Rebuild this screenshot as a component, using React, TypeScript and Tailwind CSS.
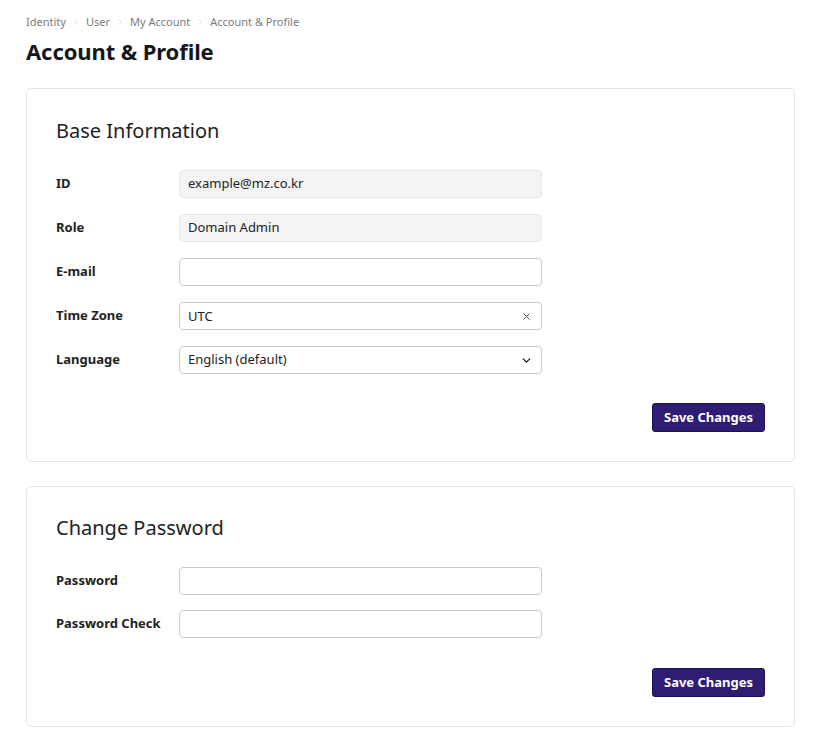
import { ChevronRight, X, ChevronDown } from "lucide-react"

const crumbs = ["Identity", "User", "My Account", "Account & Profile"]

function Row({ label, children }: { label: string; children: React.ReactNode }) {
  return (
    <div className="flex items-center">
      <div className="w-[123px] text-[13px] font-bold text-[#222222] leading-none -mt-[2px]">{label}</div>
      {children}
    </div>
  )
}

function ReadOnly({ value }: { value: string }) {
  return (
    <div className="w-[363px] h-[28px] flex items-center px-[8px] bg-[#f4f4f4] border border-[#e8e8e8] rounded-[4px] text-[13px] text-[#222222]">
      {value}
    </div>
  )
}

function TextInput({ value = "", type = "text" }: { value?: string; type?: string }) {
  return (
    <input
      type={type}
      defaultValue={value}
      className="w-[363px] h-[28px] px-[8px] bg-white border border-[#c9c9cf] rounded-[4px] text-[13px] text-[#222222] outline-none"
    />
  )
}

function SaveButton() {
  return (
    <div className="flex justify-end">
      <button className="w-[113px] h-[29px] bg-[#2f1c73] border border-[#1c0f52] rounded-[3px] text-white text-[13px] font-bold">
        Save Changes
      </button>
    </div>
  )
}

export default function App() {
  return (
    <div className="min-h-screen bg-white px-[26px] pt-[14px] pb-[20px] font-['Noto_Sans',sans-serif]">
      {/* breadcrumb */}
      <nav className="flex items-center gap-[5px] text-[11px] leading-[15px] text-[#7a7a80]">
        {crumbs.map((c, i) => (
          <span key={c} className="flex items-center gap-[5px]">
            {i > 0 && <ChevronRight className="w-[10px] h-[10px] text-[#c8c8cc]" strokeWidth={1.5} />}
            {c}
          </span>
        ))}
      </nav>
      <h1 className="mt-[7px] text-[22px] leading-[30px] font-bold text-[#16161d] tracking-[-0.1px]">Account &amp; Profile</h1>

      <section className="mt-[22px] w-[769px] border border-[#e3e3e6] rounded-[5px] px-[29px] pt-[28px] pb-[29px]">
        <h2 className="text-[20px] leading-[27px] text-[#222222]">Base Information</h2>
        <div className="mt-[26px] flex flex-col gap-[16px]">
          <Row label="ID">
            <ReadOnly value="example@mz.co.kr" />
          </Row>
          <Row label="Role">
            <ReadOnly value="Domain Admin" />
          </Row>
          <Row label="E-mail">
            <TextInput />
          </Row>
          <Row label="Time Zone">
            <div className="relative">
              <TextInput value="UTC" />
              <X className="absolute right-[10px] top-[9px] w-[11px] h-[11px] text-[#444444]" strokeWidth={2} />
            </div>
          </Row>
          <Row label="Language">
            <div className="relative w-[363px] h-[28px] flex items-center px-[8px] bg-white border border-[#c9c9cf] rounded-[4px] text-[13px] text-[#222222]">
              English (default)
              <ChevronDown className="absolute right-[8px] top-[7px] w-[13px] h-[13px] text-[#222222]" strokeWidth={2.6} />
            </div>
          </Row>
        </div>
        <div className="mt-[29px]">
          <SaveButton />
        </div>
      </section>

      <section className="mt-[24px] w-[769px] border border-[#e3e3e6] rounded-[5px] px-[29px] pt-[27px] pb-[29px]">
        <h2 className="text-[20px] leading-[27px] text-[#222222]">Change Password</h2>
        <div className="mt-[26px] flex flex-col gap-[15px]">
          <Row label="Password">
            <TextInput type="password" />
          </Row>
          <Row label="Password Check">
            <TextInput type="password" />
          </Row>
        </div>
        <div className="mt-[30px]">
          <SaveButton />
        </div>
      </section>
    </div>
  )
}
